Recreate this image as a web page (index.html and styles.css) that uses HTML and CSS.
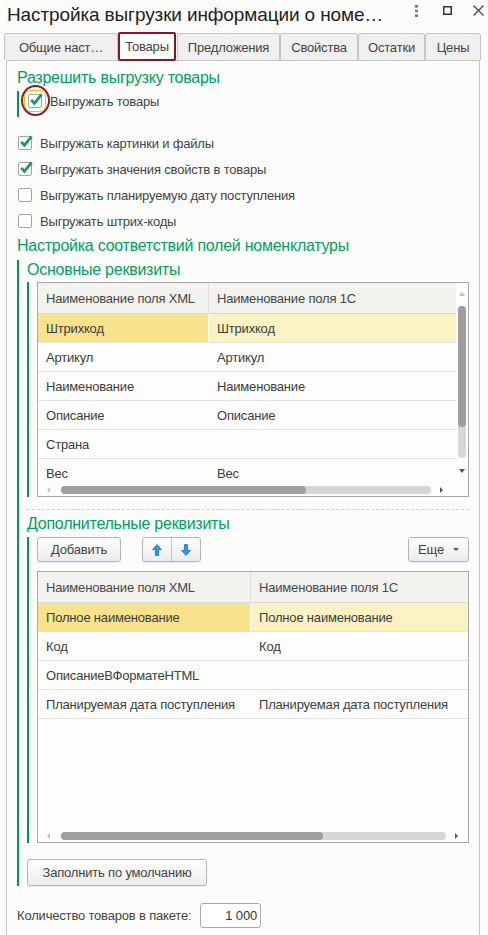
FILE: index.html
```html
<!DOCTYPE html>
<html lang="ru">
<head>
<meta charset="utf-8">
<title>Настройка выгрузки</title>
<link rel="stylesheet" href="styles.css">
</head>
<body>
<div class="titlebar">
  <div class="title">Настройка выгрузки информации о номе…</div>
  <div class="win-icons">
    <svg class="ic-dots" width="3" height="12" viewBox="0 0 3 12"><rect x="0" y="0" width="3" height="2.6" fill="#777"/><rect x="0" y="4.7" width="3" height="2.6" fill="#777"/><rect x="0" y="9.4" width="3" height="2.6" fill="#777"/></svg>
    <svg class="ic-max" width="9" height="9" viewBox="0 0 9 9"><rect x="0.75" y="0.75" width="7.5" height="7.5" fill="none" stroke="#333" stroke-width="1.5"/></svg>
    <svg class="ic-close" width="11" height="11" viewBox="0 0 11 11"><path d="M0.5 0.5L10.5 10.5M10.5 0.5L0.5 10.5" stroke="#444" stroke-width="1.2" fill="none"/></svg>
  </div>
</div>

<div class="tabs">
  <div class="tab tab1">Общие наст…</div>
  <div class="tab tab2 active">Товары</div>
  <div class="tab tab3">Предложения</div>
  <div class="tab tab4">Свойства</div>
  <div class="tab tab5">Остатки</div>
  <div class="tab tab6">Цены</div>
</div>

<div class="panel">
  <div class="gtitle g1">Разрешить выгрузку товары</div>
  <div class="gbody1">
    <div class="row1">
      <span class="cb focus">
        <svg class="tick" width="14" height="14" viewBox="0 0 14 14"><path d="M2.2 6.8L5.4 10.4L12.6 1.4" fill="none" stroke="#17995c" stroke-width="2.7"/></svg>
        <span class="annot"></span>
      </span>
      <span>Выгружать товары</span>
    </div>
  </div>

  <div class="checks">
    <div class="check"><span class="cb"><svg class="tick" width="14" height="14" viewBox="0 0 14 14"><path d="M2.2 6.8L5.4 10.4L12.6 1.4" fill="none" stroke="#17995c" stroke-width="2.7"/></svg></span><span>Выгружать картинки и файлы</span></div>
    <div class="check"><span class="cb"><svg class="tick" width="14" height="14" viewBox="0 0 14 14"><path d="M2.2 6.8L5.4 10.4L12.6 1.4" fill="none" stroke="#17995c" stroke-width="2.7"/></svg></span><span>Выгружать значения свойств в товары</span></div>
    <div class="check"><span class="cb"></span><span>Выгружать планируемую дату поступления</span></div>
    <div class="check"><span class="cb"></span><span>Выгружать штрих-коды</span></div>
  </div>

  <div class="gtitle g2">Настройка соответствий полей номенклатуры</div>
  <div class="outer-group">
    <div class="gtitle">Основные реквизиты</div>
    <div class="inner-group ig1">
      <div class="table t-main">
        <div class="tgrid">
          <div class="tr thead"><div class="c c1">Наименование поля XML</div><div class="c c2">Наименование поля 1С</div></div>
          <div class="tr sel"><div class="c c1">Штрихкод</div><div class="c c2">Штрихкод</div></div>
          <div class="tr"><div class="c c1">Артикул</div><div class="c c2">Артикул</div></div>
          <div class="tr"><div class="c c1">Наименование</div><div class="c c2">Наименование</div></div>
          <div class="tr"><div class="c c1">Описание</div><div class="c c2">Описание</div></div>
          <div class="tr"><div class="c c1">Страна</div><div class="c c2"></div></div>
          <div class="tr"><div class="c c1">Вес</div><div class="c c2">Вес</div></div>
        </div>
        <div class="vscroll">
          <svg width="6" height="4" viewBox="0 0 6 4"><polygon points="0,4 6,4 3,0" fill="#bdbdbd"/></svg>
          <div class="vtrack"><div class="vthumb"></div></div>
          <svg class="vdown" width="6" height="4" viewBox="0 0 6 4"><polygon points="0,0 6,0 3,4" fill="#555"/></svg>
        </div>
        <div class="hscroll">
          <svg width="3" height="6" viewBox="0 0 3 6"><polygon points="3,0 3,6 0,3" fill="#c4c4c4"/></svg>
          <div class="htrack h1"><div class="hthumb"></div></div>
          <svg class="hright" width="3" height="6" viewBox="0 0 3 6"><polygon points="0,0 0,6 3,3" fill="#555"/></svg>
        </div>
      </div>
    </div>

    <div class="dash"></div>

    <div class="gtitle g3">Дополнительные реквизиты</div>
    <div class="inner-group ig2">
      <div class="toolbar">
        <button class="btn b-add">Добавить</button>
        <div class="btn b-arrows">
          <span class="half first"><svg width="10" height="12" viewBox="0 0 10 12"><polygon points="5,0.6 9.4,5.6 6.6,5.6 6.6,11.4 3.4,11.4 3.4,5.6 0.6,5.6" fill="#2f96e8" stroke="#1c70c4" stroke-width="0.8"/></svg></span>
          <span class="half"><svg width="10" height="12" viewBox="0 0 10 12"><polygon points="5,11.4 9.4,6.4 6.6,6.4 6.6,0.6 3.4,0.6 3.4,6.4 0.6,6.4" fill="#2f96e8" stroke="#1c70c4" stroke-width="0.8"/></svg></span>
        </div>
        <button class="btn b-more">Еще<svg class="caret" width="6" height="3" viewBox="0 0 6 3"><polygon points="0,0 6,0 3,3" fill="#555"/></svg></button>
      </div>
      <div class="table t-extra">
        <div class="tgrid">
          <div class="tr thead"><div class="c c1">Наименование поля XML</div><div class="c c2">Наименование поля 1С</div></div>
          <div class="tr sel"><div class="c c1">Полное наименование</div><div class="c c2">Полное наименование</div></div>
          <div class="tr"><div class="c c1">Код</div><div class="c c2">Код</div></div>
          <div class="tr"><div class="c c1">ОписаниеВФорматеHTML</div><div class="c c2"></div></div>
          <div class="tr"><div class="c c1">Планируемая дата поступления</div><div class="c c2">Планируемая дата поступления</div></div>
        </div>
        <div class="hscroll">
          <svg width="3" height="6" viewBox="0 0 3 6"><polygon points="3,0 3,6 0,3" fill="#c4c4c4"/></svg>
          <div class="htrack h2"><div class="hthumb"></div></div>
          <svg class="hright" width="3" height="6" viewBox="0 0 3 6"><polygon points="0,0 0,6 3,3" fill="#555"/></svg>
        </div>
      </div>
    </div>

    <button class="btn b-fill">Заполнить по умолчанию</button>
  </div>

  <div class="count">
    <span class="count-label">Количество товаров в пакете:</span>
    <span class="count-input">1 000</span>
  </div>
</div>
</body>
</html>
```

FILE: styles.css
```css
* { box-sizing: border-box; }
html, body { margin: 0; padding: 0; }
body {
  width: 488px;
  height: 935px;
  overflow: hidden;
  background: #fcfcfa;
  font-family: "Liberation Sans", Arial, sans-serif;
  font-size: 13px;
  letter-spacing: -0.18px;
  color: #444;
}

/* title bar */
.titlebar { display: flex; height: 30px; padding: 0 4px 0 7px; }
.title { flex: 1; font-size: 19px; letter-spacing: -0.12px; line-height: 30px; color: #222; white-space: nowrap; overflow: hidden; }
.win-icons { display: flex; align-items: center; height: 21px; }
.ic-dots { margin-right: 25px; }
.ic-max { margin-right: 21px; }

/* tabs */
.tabs { display: flex; align-items: flex-end; height: 30px; padding: 2px 0 0 4px; position: relative; z-index: 1; }
.tab {
  height: 27px;
  border: 1px solid #c5c5c5;
  border-bottom: 0;
  border-radius: 3px 3px 0 0;
  background: #efefef;
  display: flex; align-items: center; justify-content: center;
  white-space: nowrap;
  color: #444;
}
.tab.active { height: 29px; margin-bottom: -1px; border: 2px solid #7b1a2b; border-radius: 2px; background: #fcfcfa; }
.tab1 { width: 114px; }
.tab2 { width: 58px; }
.tab3 { width: 103px; margin-left: 1px; }
.tab4 { width: 78px; }
.tab5 { width: 67px; }
.tab6 { width: 56px; }

/* panel */
.panel {
  margin-left: 6px;
  width: 474px;
  height: 875px;
  border: 1px solid #c6c6c6;
  border-bottom: 0;
  padding: 0 10px;
}

.gtitle { font-size: 16px; letter-spacing: -0.25px; line-height: 20px; color: #00a060; white-space: nowrap; }
.g1 { margin-top: 7px; }
.g2 { margin-top: 2px; }
.g3 { margin-top: 4px; }

.gbody1 { margin-top: 3px; height: 26px; border-left: 2px solid #00965a; padding-left: 9px; }
.row1 { display: flex; align-items: center; gap: 8px; height: 20px; }

.cb {
  position: relative;
  flex: none;
  width: 14px; height: 14px;
  border: 1px solid #a3a3a3;
  border-radius: 2px;
  background: #fff;
}
.cb .tick { position: absolute; left: 0; top: -2px; overflow: visible; }
.cb.focus { outline: 1px solid #f3c400; outline-offset: 3px; }
.annot {
  position: absolute;
  left: -8px; top: -10px;
  width: 29px; height: 31px;
  border: 2px solid #8c1d2c;
  border-radius: 50%;
}

.checks { margin-top: 13px; padding-left: 1px; }
.check { display: flex; align-items: center; gap: 8px; height: 26px; }

/* groups */
.outer-group { margin-top: 4px; border-left: 2px solid #00965a; padding-left: 8px; }
.inner-group { border-left: 2px solid #00965a; padding-left: 8px; }
.ig1 { margin-top: 2px; }
.ig2 { margin-top: 3px; }
.dash { margin-top: 12px; border-top: 1px dashed #d2d2d2; }

/* tables */
.table { display: grid; border: 1px solid #a8a8a8; background: #fdfdfb; }
.t-main { height: 215px; grid-template-columns: 1fr 12px; grid-template-rows: 1fr 14px; }
.t-extra { margin-top: 9px; height: 272px; grid-template-columns: 1fr; grid-template-rows: 1fr 14px; }
.tgrid { overflow: hidden; min-height: 0; }
.tr { display: flex; height: 29px; border-bottom: 1px solid #e4e4e4; }
.tr.thead { height: 31px; background: #f2f2ef; border-bottom: 1px solid #d8d8d8; }
.c { display: flex; align-items: center; padding-left: 8px; white-space: nowrap; overflow: hidden; color: #3d3d3d; }
.thead .c { color: #474747; }
.c1 { border-right: 1px solid transparent; flex: none; }
.c2 { flex: 1; }
.t-main .c1 { width: 171px; }
.t-extra .c1 { width: 213px; }
.thead .c1 { border-right-color: #dcdcdc; }
.sel .c1 { background: #f6e38b; border-right-color: #fff; }
.sel .c2 { background: #faf2c3; }

.vscroll { display: flex; flex-direction: column; align-items: center; padding-top: 9px; }
.vtrack { margin-top: 10px; width: 8px; height: 152px; background: #d6d6d6; border-radius: 4px; }
.vthumb { height: 121px; background: #9e9e9e; border-radius: 4px; }
.vdown { margin-top: 11px; }

.hscroll { grid-column: 1 / -1; display: flex; align-items: center; padding: 2px 0 0 9px; }
.htrack { margin-left: 11px; height: 8px; background: #d6d6d6; border-radius: 4px; }
.hthumb { height: 8px; background: #9e9e9e; border-radius: 4px; }
.h1 { width: 370px; }
.h1 .hthumb { width: 245px; }
.h2 { width: 385px; }
.h2 .hthumb { width: 262px; }
.hright { margin-left: 9px; }

/* buttons */
.toolbar { display: flex; height: 25px; }
.btn {
  height: 25px;
  padding: 0;
  border: 1px solid #b3b3b3;
  border-radius: 3px;
  background: linear-gradient(#ffffff, #ececec);
  box-shadow: 0 1px 1px rgba(0,0,0,0.06);
  display: flex; align-items: center; justify-content: center;
  font: inherit;
  letter-spacing: inherit;
  color: #444;
}
.b-add { width: 84px; }
.b-arrows { width: 59px; margin-left: 21px; }
.half { height: 100%; display: flex; align-items: center; justify-content: center; flex: 1; }
.half.first { flex: none; width: 29px; border-right: 1px solid #c3c3c3; }
.b-more { width: 61px; margin-left: auto; }
.caret { margin-left: 9px; }
.b-fill { margin-top: 16px; width: 180px; height: 27px; }

/* bottom */
.count { display: flex; align-items: center; height: 25px; margin-top: 17px; }
.count-label { flex: none; width: 183px; }
.count-input {
  width: 61px; height: 25px;
  border: 1px solid #a9a9a9;
  border-radius: 3px;
  background: #fff;
  display: flex; align-items: center; justify-content: flex-end;
  padding-right: 3px;
  color: #333;
}
```
